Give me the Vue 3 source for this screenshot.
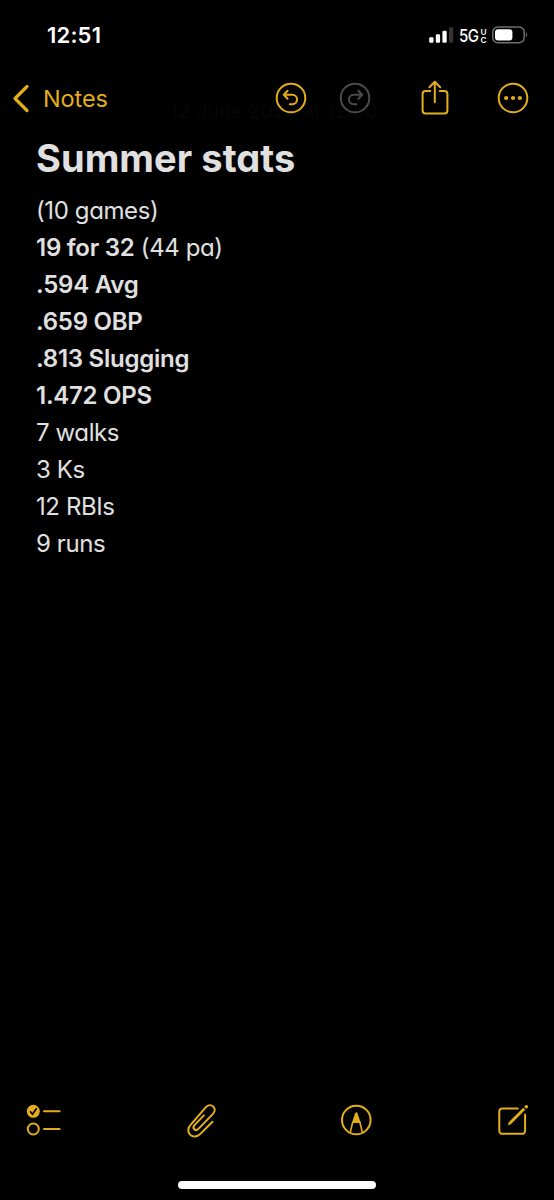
<script setup>
  const title = 'Summer stats'

  const lines = [
    { text: '(10 games)' },
    { bold: '19 for 32', text: ' (44 pa)' },
    { bold: '.594 Avg' },
    { bold: '.659 OBP' },
    { bold: '.813 Slugging' },
    { bold: '1.472 OPS' },
    { text: '7 walks' },
    { text: '3 Ks' },
    { text: '12 RBIs' },
    { text: '9 runs' },
  ]
</script>

<template>
  <div class="screen">
    <header class="status">
      <span class="time">12:51</span>
      <svg class="signal" width="25" height="16" viewBox="0 0 25 16">
        <rect x="0.2" y="10.3" width="4.3" height="5.5" rx="1.2" />
        <rect x="6.8" y="7.3" width="4.3" height="8.5" rx="1.2" />
        <rect x="13.4" y="3.8" width="4.3" height="12" rx="1.2" />
        <rect class="off" x="20" y="0.3" width="4.3" height="15.5" rx="1.2" />
      </svg>
      <span class="network">5G</span>
      <span class="uc"><span>U</span><span>C</span></span>
      <svg class="battery" width="36" height="18" viewBox="0 0 36 18">
        <rect class="shell" x="0.8" y="1" width="31.4" height="15.8" rx="5" />
        <rect x="3" y="3.2" width="17.4" height="11.4" rx="3" />
        <path class="cap" d="M33.9 6q2.4 2.8 0 5.6z" />
      </svg>
    </header>

    <nav class="toolbar">
      <button class="back">
        <svg width="18" height="30" viewBox="0 0 18 30">
          <path d="M15 2.5L3 14.5l12 12" />
        </svg>
        Notes
      </button>
      <span class="date">12 June 2023 at 12:50</span>
      <button class="undo">
        <svg width="32" height="32" viewBox="0 0 32 32">
          <circle cx="16" cy="16" r="14.3" />
          <path d="M12.6 8.8L8.8 12.8l3.8 3.9M9 12.8h8.4a4.6 4.7 0 0 1 0 9.4h-2.6" />
        </svg>
      </button>
      <button class="redo">
        <svg width="32" height="32" viewBox="0 0 32 32">
          <circle cx="16" cy="16" r="14.3" />
          <path d="M19.4 8.8l3.8 4-3.8 3.9M23 12.8h-8.4a4.6 4.7 0 0 0 0 9.4h2.6" />
        </svg>
      </button>
      <button class="share">
        <svg width="30" height="36" viewBox="0 0 30 36">
          <path d="M10.2 11H5.6a3 3 0 0 0-3 3v16.4a3 3 0 0 0 3 3h18.8a3 3 0 0 0 3-3V14a3 3 0 0 0-3-3h-4.6" />
          <path d="M14.8 22.2V2M9.4 7.3l5.4-5.5 5.4 5.5" />
        </svg>
      </button>
      <button class="more">
        <svg width="32" height="32" viewBox="0 0 32 32">
          <circle cx="16" cy="16" r="14.3" />
          <g class="solid">
            <circle cx="9.1" cy="16" r="2.1" />
            <circle cx="16" cy="16" r="2.1" />
            <circle cx="22.9" cy="16" r="2.1" />
          </g>
        </svg>
      </button>
    </nav>

    <main>
      <h1>{{ title }}</h1>
      <p v-for="line in lines"><b v-if="line.bold">{{ line.bold }}</b>{{ line.text }}</p>
    </main>

    <footer>
      <button>
        <svg width="36" height="36" viewBox="0 0 36 36">
          <circle class="solid" cx="8.3" cy="9.3" r="6.5" />
          <path class="check" d="M5.4 9.8l2.1 2.5 3.8-5.6" />
          <circle cx="8.3" cy="27" r="5.5" />
          <path d="M19 9.3h15.6M19 27h15.6" />
        </svg>
      </button>
      <button>
        <svg width="36" height="36" viewBox="0 0 36 36">
          <path
            d="M27.5 19.8L15.4 31.9c-3.2 3.2-7.6 3.4-10.3.7s-2.4-6.9.7-10L20.9 5.1c2.2-2.3 5.2-2.5 7.3-.6 2.1 2 2 5.1-.2 7.4L13.4 26.9c-1.3 1.3-3 1.4-4.1.3s-1-2.8.2-4.1L18.9 13.4"
          />
        </svg>
      </button>
      <button>
        <svg width="36" height="36" viewBox="0 0 36 36">
          <circle cx="18.3" cy="18" r="14.3" />
          <path class="solid" d="M13.9 20.8l3.2-9.6q1.2-1.8 2.4 0l3.2 9.6z" />
          <path class="thin" d="M12.3 30.4l2.4-10.2h7.2l2.4 10.2" />
        </svg>
      </button>
      <button>
        <svg width="36" height="36" viewBox="0 0 36 36">
          <path d="M24.8 6.4H9.3a3 3 0 0 0-3 3v19.4a3 3 0 0 0 3 3h19.8a3 3 0 0 0 3-3V12.6" />
          <path class="pencil" d="M16.8 21.2L31.2 6.8" />
          <path class="solid" d="M14.9 23.3l1-3.2 2.2 2.2z" />
          <circle class="solid" cx="33.3" cy="4.8" r="1.8" />
        </svg>
      </button>
    </footer>
    <div class="home"></div>
  </div>
</template>

<style>
  body {
    margin: 0;
    background-color: #000;
  }
</style>

<style scoped>
  .screen {
    box-sizing: border-box;
    width: 554px;
    height: 1200px;
    display: flex;
    flex-direction: column;
    background-color: #000;
    color: #e0e0e0;
    font-family: Inter, 'Liberation Sans', sans-serif;
    overflow: hidden;
  }
  svg {
    display: block;
    flex: none;
  }
  button {
    padding: 0;
    border: none;
    background: none;
    color: #e3ae1c;
    font: inherit;
  }
  button svg {
    fill: none;
    stroke: currentColor;
    stroke-width: 2;
    stroke-linecap: round;
    stroke-linejoin: round;
  }
  .solid {
    fill: currentColor;
    stroke: none;
  }

  .status {
    height: 70px;
    display: flex;
    align-items: flex-start;
    color: #fff;
    fill: #fff;
  }
  .time {
    width: 382px;
    margin: 22px 0 0 47px;
    font-size: 22px;
    font-weight: 600;
    line-height: 27px;
    letter-spacing: 0.2px;
  }
  .signal {
    margin-top: 27px;
  }
  .off {
    fill: #333;
  }
  .network {
    width: 21px;
    margin: 25px 0 0 4.5px;
    font-size: 17.5px;
    font-weight: 500;
    line-height: 21px;
    letter-spacing: -0.5px;
    white-space: nowrap;
    transform: scaleX(0.86);
    transform-origin: left;
  }
  .uc {
    width: 8px;
    margin-top: 28px;
    display: flex;
    flex-direction: column;
    font-size: 8.2px;
    font-weight: 600;
    line-height: 8px;
    text-align: center;
  }
  .battery {
    margin: 26px 0 0 4.5px;
  }
  .shell {
    fill: none;
    stroke: #6e6e6e;
    stroke-width: 1.5;
  }
  .cap {
    fill: #6e6e6e;
  }

  .toolbar {
    height: 60px;
    display: flex;
    align-items: flex-start;
    position: relative;
  }
  .back {
    width: 262.5px;
    margin: 13px 0 0 12px;
    display: flex;
    align-items: center;
    gap: 13px;
    font-size: 23.5px;
    line-height: 32px;
    letter-spacing: -0.1px;
  }
  .back svg {
    stroke-width: 3.2;
  }
  /* note date scrolled under the bar */
  .date {
    position: absolute;
    top: 29px;
    left: 170px;
    color: #060606;
    font-size: 20px;
    line-height: 24px;
    white-space: nowrap;
  }
  .undo,
  .redo,
  .more,
  .share {
    position: relative;
  }
  .undo {
    margin-top: 12.3px;
  }
  .redo {
    margin: 12.3px 0 0 32.8px;
    color: #4b4b4d;
  }
  .share {
    margin: 9.5px 0 0 48.7px;
  }
  .more {
    margin: 12.2px 0 0 47px;
  }

  main {
    flex: 1;
    padding: 5px 36px 0;
    font-feature-settings: 'cv11';
  }
  h1 {
    margin: 0 0 10px;
    font-size: 38px;
    font-weight: 700;
    line-height: 47px;
    letter-spacing: 0.05px;
  }
  p {
    margin: 0;
    font-size: 24px;
    line-height: 37px;
    letter-spacing: -0.4px;
    white-space: pre;
  }
  b {
    font-weight: 600;
    letter-spacing: -0.25px;
  }

  footer {
    height: 79px;
    display: grid;
    grid-template-columns: 160px 153px 155px 36px;
    align-items: start;
    padding-left: 25px;
  }
  footer button {
    width: 36px;
  }
  .check {
    stroke: #000;
    stroke-width: 1.6;
  }
  .thin {
    stroke-width: 1.6;
  }
  .pencil {
    stroke-width: 3;
    stroke-linecap: butt;
  }
  .home {
    width: 198px;
    height: 8px;
    margin: 0 0 11px 178.3px;
    border-radius: 4px;
    background-color: #fff;
  }
</style>
